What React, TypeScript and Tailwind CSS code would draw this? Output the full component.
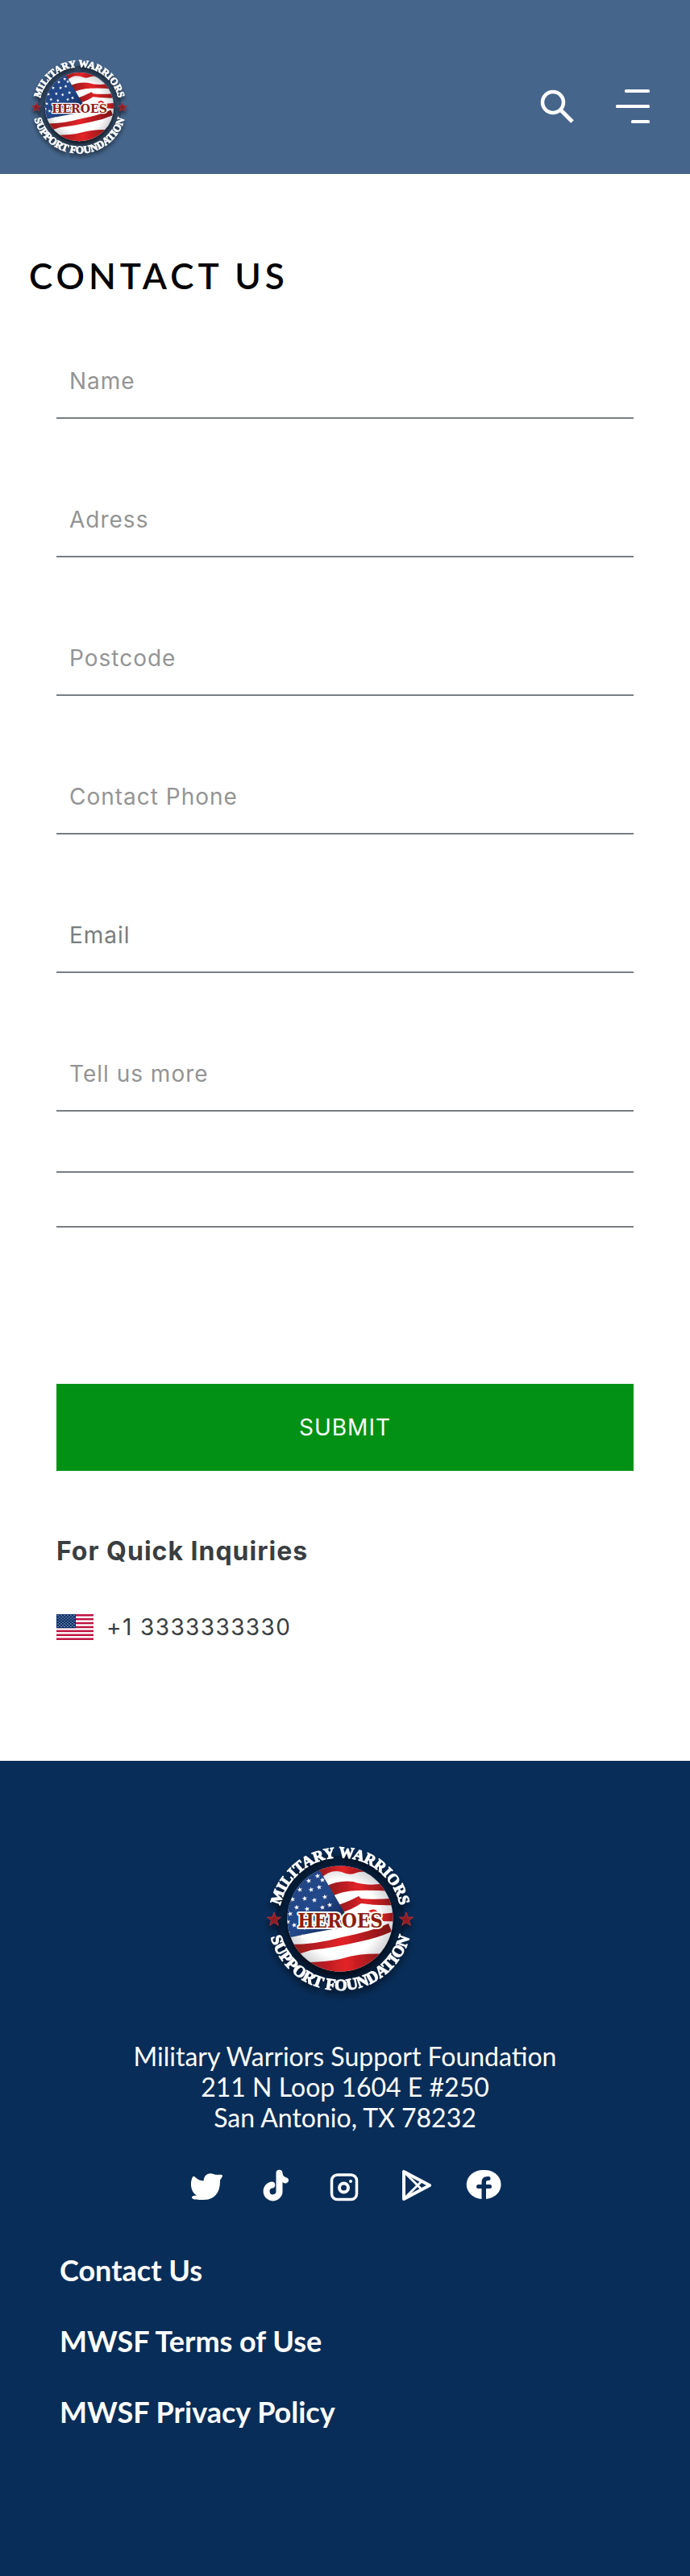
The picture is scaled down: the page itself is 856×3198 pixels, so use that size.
import React from "react";

const STAR = "M0 -9 L2.1 -2.9 L8.6 -2.8 L3.4 1.1 L5.3 7.3 L0 3.6 L-5.3 7.3 L-3.4 1.1 L-8.6 -2.8 L-2.1 -2.9 Z";

const STARS: [number, number][] = [
  [68, 43], [57, 49], [46, 60], [60, 60], [70, 57], [37, 72], [52, 71], [64, 73], [77, 69], [42, 82],
  [55, 84], [74, 82], [34, 90], [48, 95], [66, 91], [83, 79], [39, 104], [53, 107], [64, 101], [91, 93],
  [31, 114], [50, 118], [82, 99], [35, 126], [31, 100], [74, 48],
];

function Logo({ id, className }: { id: string; className: string }) {
  return (
    <svg viewBox="0 0 192 204" className={className} role="img" aria-label="Military Warriors Support Foundation Heroes">
      <defs>
        <linearGradient id={id + "-red"} x1="0" y1="0" x2="1" y2="0">
          <stop offset="0" stopColor="#8c1a1c" />
          <stop offset=".5" stopColor="#e32227" />
          <stop offset="1" stopColor="#7c1517" />
        </linearGradient>
        <radialGradient id={id + "-white"} cx=".5" cy=".5" r=".5">
          <stop offset=".7" stopColor="#fff" />
          <stop offset="1" stopColor="#cfcfd2" />
        </radialGradient>
        <linearGradient id={id + "-blue"} x1="0" y1="0" x2="1" y2="1">
          <stop offset="0" stopColor="#1f3f7c" />
          <stop offset=".55" stopColor="#24498c" />
          <stop offset="1" stopColor="#0b1c45" />
        </linearGradient>
        <clipPath id={id + "-clip"}>
          <circle cx="96" cy="96" r="65.5" />
        </clipPath>
        <filter id={id + "-shadow"} x="-20%" y="-20%" width="150%" height="150%">
          <feDropShadow dx="0" dy="6" stdDeviation="4" floodColor="#000" floodOpacity=".65" />
        </filter>
        <path id={id + "-top"} d="M20 96 A76 76 0 0 1 172 96" />
        <path id={id + "-bottom"} d="M7 96 A89 89 0 0 0 185 96" />
      </defs>
      <circle cx="96" cy="98" r="72" fill="none" stroke="#000" strokeOpacity=".28" strokeWidth="16" />
      <g filter={`url(#${id}-shadow)`}>
        <g clipPath={`url(#${id}-clip)`}>
          <rect x="28" y="28" width="136" height="136" fill={`url(#${id}-white)`} />
          <g fill={`url(#${id}-red)`}>
            <path d="M64 38 Q78 26 96 28 Q118 28 134 40 Q124 36 116 39 Q108 43 98 38 Q84 34 72 46 Z" />
            <path d="M78 56 Q94 48 112 50 Q134 57 154 51 L160 62 Q136 60 116 61 Q98 62 86 68 Z" />
            <path d="M90 80 Q104 76 119 68 L122 71 Q140 73 166 70 L166 79 Q142 80 122 77 Q108 86 98 88 Z" />
            <path d="M126 91 Q144 91 166 88 L166 99 Q146 100 126 97 Z" />
            <path d="M34 128 Q66 128 98 119 Q134 112 156 102 L160 112 Q142 120 122 124 Q88 132 60 135 Q44 140 38 142 Z" />
            <path d="M50 150 Q82 150 100 145 Q124 138 156 140 L120 160 Q96 162 86 168 Z" />
          </g>
          <path d="M22 28 L66 28 L103 91 L100 107 Q66 112 26 121 Z" fill={`url(#${id}-blue)`} />
          {STARS.map(([x, y]) => (
            <path key={`${x}-${y}`} d={STAR} fill="#fff" transform={`translate(${x} ${y}) rotate(-12) scale(.38)`} />
          ))}
        </g>
        <g fill="#fff" stroke="#fff" strokeWidth="1" fontFamily="'Liberation Serif',serif" fontWeight="700" textAnchor="middle">
          <text fontSize="19">
            <textPath href={`#${id}-top`} startOffset="50%">MILITARY WARRIORS</textPath>
          </text>
          <text fontSize="20">
            <textPath href={`#${id}-bottom`} startOffset="50%">SUPPORT FOUNDATION</textPath>
          </text>
        </g>
        <g fill="#8f1a20" stroke="#c1343a" strokeWidth=".8">
          <path d={STAR} transform="translate(14 97)" />
          <path d={STAR} transform="translate(178 97)" />
        </g>
      </g>
      <path d="M132 88 Q138 83 143 90" fill="none" stroke="#e32227" strokeWidth="3" />
      <text x="96" y="107" textAnchor="middle" fontFamily="'DejaVu Serif Condensed','DejaVu Serif',serif" fontWeight="700" fontSize="24" fill="#8c1d10" stroke="#fff" strokeWidth="4" strokeLinejoin="round" paintOrder="stroke">
        HEROES
      </text>
    </svg>
  );
}

function Flag() {
  return (
    <svg viewBox="0 0 46 32" className="h-8 w-[46px]" role="img" aria-label="United States">
      <rect width="46" height="32" fill="#fff" />
      {[0, 1, 2, 3, 4, 5, 6].map((i) => (
        <rect key={i} y={i * 4.92} width="46" height="2.46" fill="#bf1140" />
      ))}
      <rect width="24" height="17.2" fill="#0a2f68" />
      {[0, 1, 2, 3, 4, 5, 6, 7, 8].map((r) =>
        (r % 2 ? [0, 1, 2, 3, 4] : [0, 1, 2, 3, 4, 5]).map((c) => (
          <circle key={`${r}-${c}`} cx={(r % 2 ? 4 : 2) + c * 4} cy={1.7 + r * 1.72} r=".65" fill="#c9d3e2" />
        )),
      )}
    </svg>
  );
}

const SOCIAL = [
  {
    label: "Twitter",
    art: <path fill="#fff" d="M7 14.500 C9.500 11.500 11 19 20.500 19.500 C21 12 27 8.500 33 11 C36 12.500 39 11.500 43 12 Q45.500 12.500 41 18.500 C41.500 33 35 43 21 43 C14 43 7 43 6 40.500 C5.500 38.500 8 38 12 37.500 C4 33 3.500 21 7 14.500 Z" />,
  },
  {
    label: "TikTok",
    art: <path fill="#fff" d="M24.500 10 A4 4 0 0 1 32.500 9.500 C33 14 35 14.500 38 15.500 A3.700 3.700 0 0 1 37 22.500 C35 22.500 34 22 32.500 21 V31 A12 12 0 1 1 19 20.500 A4 4 0 0 1 19.500 28.500 A4 4 0 1 0 24.500 32 Z" />,
  },
  {
    label: "Instagram",
    art: (
      <g fill="none" stroke="#fff">
        <rect x="7.500" y="12" width="31" height="30.500" rx="7" strokeWidth="3.500" />
        <circle cx="22.500" cy="28" r="5.500" strokeWidth="4" />
        <circle cx="31" cy="20" r="2" fill="#fff" stroke="none" />
      </g>
    ),
  },
  {
    label: "Google Play",
    art: (
      <g fill="none" stroke="#fff" strokeLinejoin="round" strokeLinecap="round">
        <path d="M11 8 V42 L43 25 Z" strokeWidth="4" />
        <path d="M12 9 L33 30 M12 41 L33 20" strokeWidth="3" />
      </g>
    ),
  },
  {
    label: "Facebook",
    art: (
      <path fill="#fff" d="M24 6 A20 18 0 0 0 21.500 42 V29 H17.500 A2.500 2.500 0 0 1 17.500 24 H21.500 V21 Q21.500 14 29 14 H30 A2.500 2.500 0 0 1 30 19 Q27 18.500 27 21 V24 H31.500 A2.500 2.500 0 0 1 31.500 29 H27 V42 A20 18 0 0 0 24 6 Z" />
    ),
  },
];

const FIELDS = [
  { id: "name", label: "Name", type: "text", tone: "placeholder:text-[#949494]" },
  { id: "address", label: "Adress", type: "text", tone: "placeholder:text-[#949494]" },
  { id: "postcode", label: "Postcode", type: "text", tone: "placeholder:text-[#949494]" },
  { id: "phone", label: "Contact Phone", type: "tel", tone: "placeholder:text-[#949494]" },
  { id: "email", label: "Email", type: "email", tone: "placeholder:text-[#787e7d]" },
  { id: "message", label: "Tell us more", type: "text", tone: "placeholder:text-[#949494]" },
];

export default function App() {
  return (
    <div className="min-h-screen bg-white font-['Inter',sans-serif] text-[#393e41]">
      <header className="flex h-[216px] items-center justify-between bg-[#45658b] pl-9 pr-[50px] pt-[48px]">
        <a href="#home" className="mt-2">
          <Logo id="header-logo" className="h-[133px] w-[125px]" />
        </a>
        <div className="flex items-center gap-[52px]">
          <button type="button" aria-label="Search">
            <svg viewBox="0 0 42 42" className="block h-[42px] w-[42px]" fill="none" stroke="#fff">
              <circle cx="16" cy="16" r="13" strokeWidth="4.500" />
              <path d="M26.500 26.500 L40 40" strokeWidth="5" />
            </svg>
          </button>
          <button type="button" aria-label="Menu">
            <svg viewBox="0 0 42 42" className="block h-[42px] w-[42px]" fill="#fff">
              <rect x="11" width="31" height="4" rx="1.500" />
              <rect y="19" width="42" height="4" rx="1.500" />
              <rect x="19" y="38" width="23" height="4" rx="1.500" />
            </svg>
          </button>
        </div>
      </header>

      <main>
        <h1 className="px-9 pt-24 font-['Lato',sans-serif] text-[44px] leading-[60px] font-semibold tracking-[5px] text-black">CONTACT US</h1>
        <form className="px-[70px] pt-[60px]" onSubmit={(e) => e.preventDefault()}>
          <div className="flex flex-col gap-[84px]">
            {FIELDS.map((f) => (
              <input
                key={f.id}
                id={f.id}
                name={f.id}
                type={f.type}
                aria-label={f.label}
                placeholder={f.label}
                className={`h-[88px] w-full border-b-2 border-[#787e82] bg-transparent px-4 pb-1 text-[28px] tracking-[1px] outline-none placeholder:opacity-100 ${f.tone}`}
              />
            ))}
          </div>
          <input aria-label="Message, second line" className="block h-[76px] w-full border-b-2 border-[#787e82] px-4 text-[28px] outline-none" />
          <input aria-label="Message, third line" className="block h-[68px] w-full border-b-2 border-[#787e82] px-4 text-[28px] outline-none" />
          <button type="submit" className="mt-[194px] block h-[108px] w-full bg-[#029115] text-[28px] tracking-[1px] text-white">SUBMIT</button>
        </form>
        <section className="px-[70px] pt-20 pb-[146px]">
          <h2 className="text-[32px] leading-10 font-bold tracking-[1px]">For Quick Inquiries</h2>
          <div className="mt-[54px] flex items-center gap-4">
            <Flag />
            <a href="tel:+13333333330" className="text-[28px] leading-10 tracking-wider">+1 3333333330</a>
          </div>
        </section>
      </main>

      <footer className="bg-[#082d58] pt-[100px] pb-[182px] font-['Lato',sans-serif] text-white">
        <div className="flex justify-center pr-3">
          <Logo id="footer-logo" className="h-[204px] w-[192px]" />
        </div>
        <address className="mt-11 text-center text-[32px] leading-[38px] not-italic">
          Military Warriors Support Foundation<br />
          211 N Loop 1604 E #250<br />
          San Antonio, TX 78232
        </address>
        <div className="mt-10 flex justify-center gap-[38px]">
          {SOCIAL.map((s) => (
            <a key={s.label} href="#social" aria-label={s.label}>
              <svg viewBox="0 0 48 48" className="h-12 w-12">{s.art}</svg>
            </a>
          ))}
        </div>
        <nav className="mt-[60px] flex flex-col gap-11 px-[74px] text-[36px] leading-[44px] font-bold">
          <a href="#contact">Contact Us</a>
          <a href="#terms">MWSF Terms of Use</a>
          <a href="#privacy">MWSF Privacy Policy</a>
        </nav>
      </footer>
    </div>
  );
}
